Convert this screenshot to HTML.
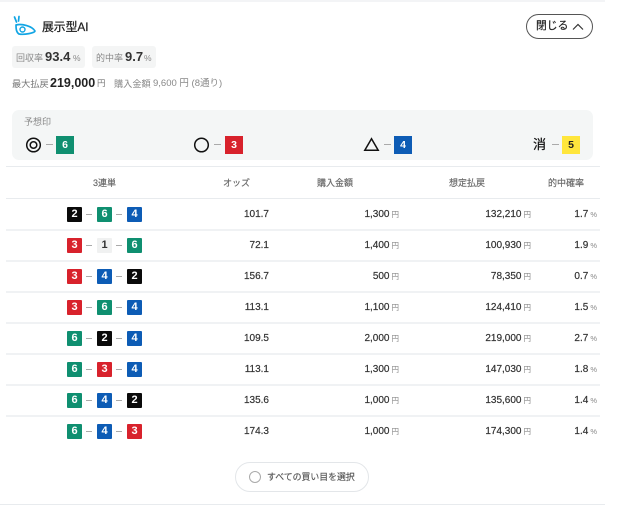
<!DOCTYPE html>
<html><head><meta charset="utf-8">
<style>
html,body{margin:0;padding:0;background:#fff;}
#p{position:relative;width:640px;height:505px;overflow:hidden;background:#fff;font-family:"Liberation Sans","Noto Sans CJK JP",sans-serif;color:#333;}
#p div{position:absolute;white-space:nowrap;}
.l{left:6px;width:594px;height:2px;background:#f0f2f4;}
.b{width:15px;height:15px;line-height:15px;text-align:center;font-size:11px;font-weight:700;color:#fff;border-radius:1px;}
.m{width:18px;height:18px;line-height:18px;text-align:center;font-size:10.500px;font-weight:700;color:#fff;top:136px;}
.k{background:#0a0a0a}.g{background:#0f8f70}.u{background:#0d5cb5}.r{background:#d8222c}.w{background:#f0f1f1;color:#333!important}.y{background:#ffe63c;color:#222!important}
.d{width:6px;height:1px;background:#aaa;}
.h{top:176px;font-size:9px;color:#666;line-height:14px;-webkit-text-stroke:.15px #666;}
.o,.t,.e,.q{font-size:10px;line-height:14px;color:#333;text-align:right;-webkit-text-stroke:.2px #333;transform:translateY(1px);}
.o{right:371px}.t{right:241px}.e{right:109px}.q{right:43px}
small{font-size:7.500px;color:#888;margin-left:2px;-webkit-text-stroke:0;}
</style></head><body><div id="p">
<div style="left:0;top:0;width:605px;height:2px;background:#f3f4f6"></div>

<svg style="position:absolute;left:12px;top:15px" width="26" height="21" viewBox="0 0 26 21" fill="none" stroke="#12a5e4" stroke-width="1.700" stroke-linecap="round" stroke-linejoin="round"><path d="M2.500 2L4.500 7M7 1.500L6.500 6"/><path d="M4 10C10 8.500 20 11 23 16C23 18 12 20 7 19C4 17 4 13 4 10Z"/><circle cx="10.500" cy="14.500" r="2.500" stroke-width="1.400"/></svg>
<div style="left:42px;top:18px;font-size:11.800px;line-height:18px;color:#222;-webkit-text-stroke:.25px #222">展示型AI</div>

<div style="left:526px;top:14px;width:65px;height:23px;border:1px solid #555;border-radius:13px;background:#fff;"></div>
<div style="left:536px;top:19px;font-size:10.800px;line-height:15px;color:#222;-webkit-text-stroke:.2px #222">閉じる</div>
<svg style="position:absolute;left:572px;top:22px" width="12" height="10" viewBox="0 0 12 10" fill="none" stroke="#333" stroke-width="1.200"><path d="M1 7.500L6 2.500L11 7.500"/></svg>

<div style="left:12px;top:46px;width:73px;height:22px;background:#f4f5f5;border-radius:3px"></div>
<div style="left:92px;top:46px;width:64px;height:22px;background:#f4f5f5;border-radius:3px"></div>
<div style="left:16px;top:51px;font-size:9px;line-height:14px;color:#888">回収率</div>
<div style="left:45px;top:49px;font-size:13px;line-height:16px;font-weight:700;color:#333;">93.4</div>
<div style="left:73px;top:52px;font-size:8.500px;line-height:12px;color:#888">%</div>
<div style="left:96px;top:51px;font-size:9px;line-height:14px;color:#888">的中率</div>
<div style="left:125px;top:49px;font-size:13px;line-height:16px;font-weight:700;color:#333">9.7</div>
<div style="left:144px;top:52px;font-size:8.500px;line-height:12px;color:#888">%</div>

<div style="left:12px;top:77px;font-size:9.200px;line-height:14px;color:#777">最大払戻</div>
<div style="left:50px;top:75px;font-size:12.500px;line-height:16px;font-weight:700;color:#222">219,000</div>
<div style="left:97px;top:77px;font-size:8.500px;line-height:13px;color:#777">円</div>
<div style="left:114px;top:77px;font-size:9.200px;line-height:14px;color:#888">購入金額</div>
<div style="left:153px;top:77px;font-size:9.500px;line-height:14px;color:#888">9,600 円 (8通り)</div>

<div style="left:12px;top:110px;width:581px;height:50px;background:#f4f6f6;border-radius:7px"></div>
<div style="left:24px;top:115px;font-size:9px;line-height:14px;color:#888">予想印</div>

<svg style="position:absolute;left:25px;top:136px" width="18" height="18" viewBox="0 0 18 18" fill="none" stroke="#111" stroke-width="1.500"><circle cx="8.500" cy="9" r="6.800"/><circle cx="8.500" cy="9" r="3.300"/></svg>
<div class="d" style="left:46px;top:144px;width:7px"></div><div class="m g" style="left:56px">6</div>
<svg style="position:absolute;left:193px;top:136px" width="18" height="18" viewBox="0 0 18 18" fill="none" stroke="#111" stroke-width="1.500"><circle cx="8.500" cy="9" r="6.800"/></svg>
<div class="d" style="left:214px;top:144px;width:7px"></div><div class="m r" style="left:225px">3</div>
<svg style="position:absolute;left:363px;top:136px" width="17" height="18" viewBox="0 0 17 18" fill="none" stroke="#111" stroke-width="1.500"><path d="M8.500 2.800L1.800 14.300H15.200Z"/></svg>
<div class="d" style="left:384px;top:144px;width:7px"></div><div class="m u" style="left:394px">4</div>
<div style="left:533px;top:136px;font-size:13px;line-height:18px;color:#111;-webkit-text-stroke:.25px #111">消</div>
<div class="d" style="left:552px;top:144px;width:7px"></div><div class="m y" style="left:562px">5</div>

<div class="l" style="top:166px;height:1px;background:#e8ebee"></div>
<div class="h" style="left:93px">3連単</div>
<div class="h" style="left:223px">オッズ</div>
<div class="h" style="left:317px">購入金額</div>
<div class="h" style="left:449px">想定払戻</div>
<div class="h" style="left:548px">的中確率</div>
<div class="l" style="top:198px;height:1px;background:#e8ebee"></div>

<!-- row 1 -->
<div class="b k" style="left:67px;top:207px">2</div><div class="d" style="left:86px;top:214px"></div><div class="b g" style="left:97px;top:207px">6</div><div class="d" style="left:116px;top:214px"></div><div class="b u" style="left:127px;top:207px">4</div>
<div class="o" style="top:207px">101.7</div><div class="t" style="top:207px">1,300<small>円</small></div><div class="e" style="top:207px">132,210<small>円</small></div><div class="q" style="top:207px">1.7<small>%</small></div>
<div class="l" style="top:229px"></div>
<!-- row 2 -->
<div class="b r" style="left:67px;top:238px">3</div><div class="d" style="left:86px;top:245px"></div><div class="b w" style="left:97px;top:238px">1</div><div class="d" style="left:116px;top:245px"></div><div class="b g" style="left:127px;top:238px">6</div>
<div class="o" style="top:238px">72.1</div><div class="t" style="top:238px">1,400<small>円</small></div><div class="e" style="top:238px">100,930<small>円</small></div><div class="q" style="top:238px">1.9<small>%</small></div>
<div class="l" style="top:260px"></div>
<!-- row 3 -->
<div class="b r" style="left:67px;top:269px">3</div><div class="d" style="left:86px;top:276px"></div><div class="b u" style="left:97px;top:269px">4</div><div class="d" style="left:116px;top:276px"></div><div class="b k" style="left:127px;top:269px">2</div>
<div class="o" style="top:269px">156.7</div><div class="t" style="top:269px">500<small>円</small></div><div class="e" style="top:269px">78,350<small>円</small></div><div class="q" style="top:269px">0.7<small>%</small></div>
<div class="l" style="top:291px"></div>
<!-- row 4 -->
<div class="b r" style="left:67px;top:300px">3</div><div class="d" style="left:86px;top:307px"></div><div class="b g" style="left:97px;top:300px">6</div><div class="d" style="left:116px;top:307px"></div><div class="b u" style="left:127px;top:300px">4</div>
<div class="o" style="top:300px">113.1</div><div class="t" style="top:300px">1,100<small>円</small></div><div class="e" style="top:300px">124,410<small>円</small></div><div class="q" style="top:300px">1.5<small>%</small></div>
<div class="l" style="top:322px"></div>
<!-- row 5 -->
<div class="b g" style="left:67px;top:331px">6</div><div class="d" style="left:86px;top:338px"></div><div class="b k" style="left:97px;top:331px">2</div><div class="d" style="left:116px;top:338px"></div><div class="b u" style="left:127px;top:331px">4</div>
<div class="o" style="top:331px">109.5</div><div class="t" style="top:331px">2,000<small>円</small></div><div class="e" style="top:331px">219,000<small>円</small></div><div class="q" style="top:331px">2.7<small>%</small></div>
<div class="l" style="top:353px"></div>
<!-- row 6 -->
<div class="b g" style="left:67px;top:362px">6</div><div class="d" style="left:86px;top:369px"></div><div class="b r" style="left:97px;top:362px">3</div><div class="d" style="left:116px;top:369px"></div><div class="b u" style="left:127px;top:362px">4</div>
<div class="o" style="top:362px">113.1</div><div class="t" style="top:362px">1,300<small>円</small></div><div class="e" style="top:362px">147,030<small>円</small></div><div class="q" style="top:362px">1.8<small>%</small></div>
<div class="l" style="top:384px"></div>
<!-- row 7 -->
<div class="b g" style="left:67px;top:393px">6</div><div class="d" style="left:86px;top:400px"></div><div class="b u" style="left:97px;top:393px">4</div><div class="d" style="left:116px;top:400px"></div><div class="b k" style="left:127px;top:393px">2</div>
<div class="o" style="top:393px">135.6</div><div class="t" style="top:393px">1,000<small>円</small></div><div class="e" style="top:393px">135,600<small>円</small></div><div class="q" style="top:393px">1.4<small>%</small></div>
<div class="l" style="top:415px"></div>
<!-- row 8 -->
<div class="b g" style="left:67px;top:424px">6</div><div class="d" style="left:86px;top:431px"></div><div class="b u" style="left:97px;top:424px">4</div><div class="d" style="left:116px;top:431px"></div><div class="b r" style="left:127px;top:424px">3</div>
<div class="o" style="top:424px">174.3</div><div class="t" style="top:424px">1,000<small>円</small></div><div class="e" style="top:424px">174,300<small>円</small></div><div class="q" style="top:424px">1.4<small>%</small></div>

<div style="left:235px;top:462px;width:132px;height:28px;border:1px solid #e3e6e9;border-radius:15px;background:#fff"></div>
<div style="left:249px;top:471px;width:10px;height:10px;border:1.500px solid #aaa;border-radius:50%"></div>
<div style="left:267px;top:470px;font-size:8.900px;line-height:14px;color:#555;-webkit-text-stroke:.15px #555">すべての買い目を選択</div>
<div style="left:0;top:504px;width:605px;height:1px;background:#e8ebee"></div>
</div></body></html>
